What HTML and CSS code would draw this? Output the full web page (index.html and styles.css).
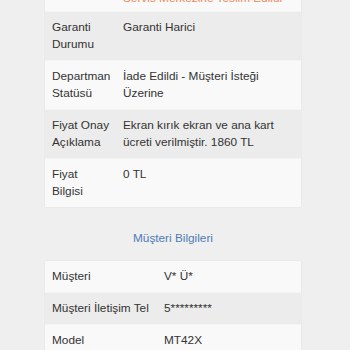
FILE: index.html
```html
<!DOCTYPE html>
<html lang="tr">
<head>
<meta charset="utf-8">
<link rel="stylesheet" href="styles.css">
</head>
<body>
<div class="page">
  <table class="card card-first">
    <colgroup><col class="col-narrow"><col></colgroup>
    <tr class="row light top-row"><td class="label">&nbsp;</td><td class="value warn">Servis Merkezine Teslim Edildi</td></tr>
    <tr class="row dark"><td class="label">Garanti Durumu</td><td class="value">Garanti Harici</td></tr>
    <tr class="row light"><td class="label">Departman Statüsü</td><td class="value">İade Edildi - Müşteri İsteği Üzerine</td></tr>
    <tr class="row dark"><td class="label">Fiyat Onay Açıklama</td><td class="value">Ekran kırık ekran ve ana kart ücreti verilmiştir. 1860 TL</td></tr>
    <tr class="row light"><td class="label">Fiyat Bilgisi</td><td class="value">0 TL</td></tr>
  </table>
  <h2 class="section-title">Müşteri Bilgileri</h2>
  <table class="card">
    <colgroup><col class="col-wide"><col></colgroup>
    <tr class="row light"><td class="label">Müşteri</td><td class="value">V* Ü*</td></tr>
    <tr class="row dark"><td class="label">Müşteri İletişim Tel</td><td class="value">5*********</td></tr>
    <tr class="row light"><td class="label">Model</td><td class="value">MT42X</td></tr>
  </table>
</div>
</body>
</html>
```
FILE: styles.css
```css
html, body {
  margin: 0;
  padding: 0;
  background: #efefef;
}
body {
  font-family: "Liberation Sans", Arial, Helvetica, sans-serif;
  font-size: 11.8px;
  line-height: 17px;
  color: #333;
}
.page {
  width: 256px;
  margin-left: 45px;
}
.card {
  width: 256px;
  table-layout: fixed;
  border-collapse: collapse;
  box-shadow: 0 0 1px rgba(0,0,0,0.12);
}
.card-first {
  margin-top: -20px;
}
.col-narrow { width: 78px; }
.col-wide { width: 119px; }
.row td {
  padding: 7px 12px 7px 7px;
  vertical-align: top;
  border-top: 1px solid #f4f4f4;
}
.row:first-child td {
  border-top: 0;
}
.row td.value { padding-left: 0; padding-right: 6px; }
.row.top-row td { padding-top: 10px; padding-bottom: 4px; }
.light td { background: #f9f9f9; }
.dark td { background: #ececec; }
.warn {
  color: #f0875a;
  white-space: nowrap;
  overflow: hidden;
}
.section-title {
  margin: 23px 0 14px;
  text-align: center;
  font-size: 11.8px;
  line-height: 17px;
  font-weight: normal;
  color: #4d7bb4;
}
```
